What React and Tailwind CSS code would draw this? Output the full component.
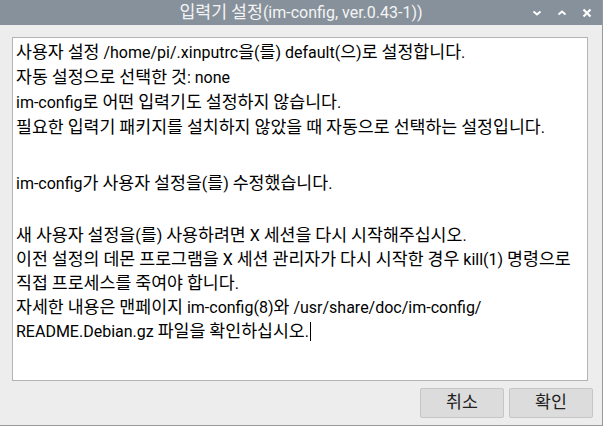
import React from "react";

const lines = [
  { t: "사용자 설정 /home/pi/.xinputrc을(를) default(으)로 설정합니다.", h: "h-[25px]" },
  { t: "자동 설정으로 선택한 것: none", h: "h-[25px]" },
  { t: "im-config로 어떤 입력기도 설정하지 않습니다.", h: "h-[25px]" },
  { t: "필요한 입력기 패키지를 설치하지 않았을 때 자동으로 선택하는 설정입니다.", h: "h-[25px]" },
  { t: "", h: "h-[31px]" },
  { t: "im-config가 사용자 설정을(를) 수정했습니다.", h: "h-[25px]" },
  { t: "", h: "h-[27px]" },
  { t: "새 사용자 설정을(를) 사용하려면 X 세션을 다시 시작해주십시오.", h: "h-[24px]" },
  { t: "이전 설정의 데몬 프로그램을 X 세션 관리자가 다시 시작한 경우 kill(1) 명령으로", h: "h-[24px]" },
  { t: "직접 프로세스를 죽여야 합니다.", h: "h-[24px]" },
  { t: "자세한 내용은 맨페이지 im-config(8)와 /usr/share/doc/im-config/", h: "h-[24px]" },
];

// hangul runs are set a little larger, like the GTK fallback font in the screenshot
const Ko = ({ text }) =>
  text.split(/([\uAC00-\uD7A3]+)/).map((part, i) =>
    /[\uAC00-\uD7A3]/.test(part) ? (
      <span key={i} className="text-[17.3px]">
        {part}
      </span>
    ) : (
      part
    )
  );

const TitleIcon = ({ children }) => (
  <svg width="12" height="12" viewBox="0 0 12 12" className="text-white">
    {children}
  </svg>
);

export default function App() {
  return (
    <div
      className="w-[603px] h-[426px] flex flex-col bg-[#ededed] border-r border-b border-[#9a9a9a] overflow-hidden"
      style={{ fontFamily: "Roboto, 'Noto Sans CJK KR', sans-serif" }}
    >
      {/* title bar */}
      <div className="h-[25px] shrink-0 bg-[#87919b] flex items-center relative">
        <div className="flex-1 text-center text-[16px] text-[#f4f4f4] leading-[25px]">
          <Ko text="입력기 설정(im-config, ver.0.43-1))" />
        </div>
        <div className="absolute right-[9px] top-0 h-[25px] flex items-center gap-[13px]">
          <TitleIcon>
            <path d="M2.5 4.5 L6 7.5 L9.5 4.5" fill="none" stroke="currentColor" strokeWidth="2" />
          </TitleIcon>
          <TitleIcon>
            <path d="M2.5 7.5 L6 4.5 L9.5 7.5" fill="none" stroke="currentColor" strokeWidth="2" />
          </TitleIcon>
          <TitleIcon>
            <path d="M2.5 2.5 L9.5 9.5 M9.5 2.5 L2.5 9.5" fill="none" stroke="currentColor" strokeWidth="2.2" />
          </TitleIcon>
        </div>
      </div>

      {/* body */}
      <div className="flex-1 flex flex-col pl-[12px] pr-[14px] pt-[12px]">
        <div className="h-[344px] bg-white border border-[#b3b3b3] pl-[3px] pt-[2px] text-[16px] text-black">
          {lines.map((l, i) => (
            <div key={i} className={`${l.h} leading-[25px] whitespace-nowrap`}>
              <Ko text={l.t} />
            </div>
          ))}
          <div className="h-[24px] leading-[25px] whitespace-nowrap flex items-center">
            <span>
              <Ko text="README.Debian.gz 파일을 확인하십시오." />
            </span>
            <span className="inline-block w-px h-[19px] bg-black ml-px" />
          </div>
        </div>

        <div className="flex justify-end gap-[5px] mt-[7px] -mr-[5px]">
          <button className="w-[84px] h-[30px] bg-[#dcdcdc] border border-[#c6c6c6] rounded-[2px] text-[16px] text-[#222]">
            <Ko text="취소" />
          </button>
          <button className="w-[84px] h-[30px] bg-[#dcdcdc] border border-[#c6c6c6] rounded-[2px] text-[16px] text-[#222]">
            <Ko text="확인" />
          </button>
        </div>
      </div>
    </div>
  );
}
